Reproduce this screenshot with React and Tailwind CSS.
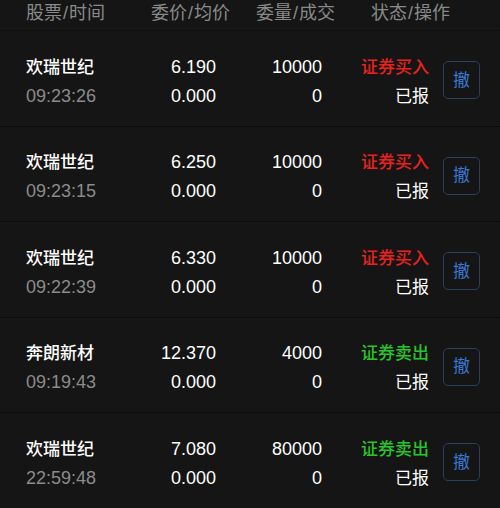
import React from "react";

const rows = [
  { name: "欢瑞世纪", time: "09:23:26", price: "6.190", avg: "0.000", qty: "10000", deal: "0", type: "证券买入", buy: true },
  { name: "欢瑞世纪", time: "09:23:15", price: "6.250", avg: "0.000", qty: "10000", deal: "0", type: "证券买入", buy: true },
  { name: "欢瑞世纪", time: "09:22:39", price: "6.330", avg: "0.000", qty: "10000", deal: "0", type: "证券买入", buy: true },
  { name: "奔朗新材", time: "09:19:43", price: "12.370", avg: "0.000", qty: "4000", deal: "0", type: "证券卖出", buy: false },
  { name: "欢瑞世纪", time: "22:59:48", price: "7.080", avg: "0.000", qty: "80000", deal: "0", type: "证券卖出", buy: false },
];

const font = { fontFamily: '"Liberation Sans", "Noto Sans CJK SC", sans-serif' };

function H({ a, b }) {
  return (
    <span>
      {a}
      <span className="mx-[1px]">/</span>
      {b}
    </span>
  );
}

export default function App() {
  return (
    <div className="w-[500px] h-[508px] bg-[#151515] overflow-hidden" style={font}>
      <div className="h-[26px] flex items-center pl-[26px] text-[18px] text-[#8a8a8a] leading-none">
        <div className="w-[125px]"><H a="股票" b="时间" /></div>
        <div className="w-[79px] text-right"><H a="委价" b="均价" /></div>
        <div className="w-[105px] text-right"><H a="委量" b="成交" /></div>
        <div className="w-[115px] text-right"><H a="状态" b="操作" /></div>
      </div>
      <div className="mt-[4px] border-t border-[#0f0f0f]">
        {rows.map((r, i) => (
          <div key={i} className="h-[95.5px] flex items-center pl-[26px] border-b border-[#0d0d0d] pt-[7px]">
            <div className="w-[110px] flex flex-col leading-[29px]">
              <span className="text-[17px] text-white font-medium">{r.name}</span>
              <span className="text-[18px] text-[#8b8b8b]">{r.time}</span>
            </div>
            <div className="w-[80px] flex flex-col items-end leading-[29px] text-[18px] text-white">
              <span>{r.price}</span>
              <span>{r.avg}</span>
            </div>
            <div className="w-[106px] flex flex-col items-end leading-[29px] text-[18px] text-white">
              <span>{r.qty}</span>
              <span>{r.deal}</span>
            </div>
            <div className="w-[107px] flex flex-col items-end leading-[29px] text-[17px]">
              <span className={r.buy ? "text-[#e8231f] font-medium" : "text-[#27c42a] font-medium"}>{r.type}</span>
              <span className="text-white">已报</span>
            </div>
            <div className="ml-[14px] w-[37px] h-[38px] rounded-[5px] border border-[#2a3f5c] flex items-center justify-center text-[17px] text-[#3b78d2] -mt-[3px]">
              撤
            </div>
          </div>
        ))}
      </div>
    </div>
  );
}
